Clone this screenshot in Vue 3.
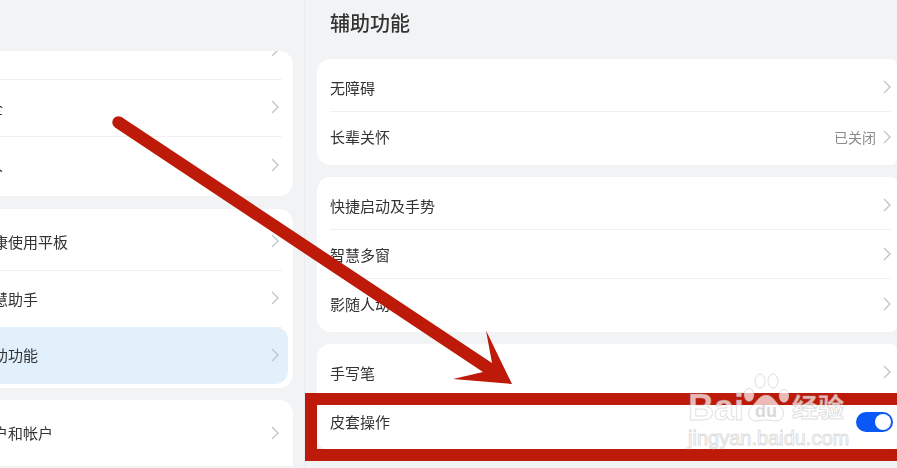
<template>
  <div class="page">
    <div class="content">
      <aside class="left-pane">
        <div v-for="(group, i) in leftGroups" :key="i" class="left-card">
          <div
            v-for="row in group"
            :key="row.label"
            class="left-row"
            :class="{ active: row.active, scrolled: row.scrolled }"
          >
            <span class="left-label" :class="{ short: row.short, hidden: row.scrolled }">{{ row.label }}</span>
            <svg class="chevron" viewBox="0 0 8 14"><path d="M1 1l6 6-6 6" /></svg>
          </div>
        </div>
      </aside>

      <main class="right-pane">
        <h1 class="title">辅助功能</h1>
        <div v-for="(group, i) in rightGroups" :key="i" class="right-card">
          <div v-for="row in group" :key="row.label" class="right-row">
            <span class="right-label">{{ row.label }}</span>
            <span v-if="row.value" class="value">{{ row.value }}</span>
            <span v-if="row.toggle" class="toggle"><i class="knob"></i></span>
            <svg v-else class="chevron" viewBox="0 0 8 14"><path d="M1 1l6 6-6 6" /></svg>
          </div>
        </div>
      </main>
    </div>

    <!-- annotation layer -->
    <svg class="arrow" viewBox="0 0 897 468">
      <path d="M115 127.500 L121.500 117 L492 363 L486 330.500 L512 384 L453 379 L483 372 L115 127.500Z" />
      <circle cx="118.300" cy="122.300" r="6" />
    </svg>
    <div class="frame"></div>

    <div class="watermark">
      <div class="wm-top">
        <span class="wm-bai">Bai</span>
        <svg class="paw" viewBox="0 0 46 56">
          <ellipse cx="6" cy="24" rx="5" ry="6.500" />
          <ellipse cx="17" cy="10" rx="5" ry="7" />
          <ellipse cx="30" cy="10" rx="5" ry="7" />
          <ellipse cx="41" cy="25" rx="5" ry="6.500" />
          <path d="M23 24c7 0 9 7 14 11 6 5 4 15-4 15-4 0-6-1-10-1s-6 1-10 1c-8 0-10-10-4-15 5-4 7-11 14-11z" />
          <text x="23" y="46" text-anchor="middle" class="wm-du">du</text>
        </svg>
        <span class="wm-cn">经验</span>
      </div>
      <div class="wm-url">jingyan.baidu.com</div>
    </div>
  </div>
</template>

<script setup>
const leftGroups = [
  [
    { label: '显示', scrolled: true, short: true },
    { label: '安全', short: true },
    { label: '个人', short: true }
  ],
  [
    { label: '健康使用平板' },
    { label: '智慧助手', mid: true },
    { label: '辅助功能', active: true }
  ],
  [
    { label: '用户和帐户' }
  ]
]

const rightGroups = [
  [
    { label: '无障碍' },
    { label: '长辈关怀', value: '已关闭' }
  ],
  [
    { label: '快捷启动及手势' },
    { label: '智慧多窗' },
    { label: '影随人动' }
  ],
  [
    { label: '手写笔' },
    { label: '皮套操作', toggle: true }
  ]
]
</script>

<style>
html, body {
  margin: 0;
  overflow: hidden;
}
</style>

<style scoped>
.page {
  position: relative;
  width: 897px;
  height: 468px;
  overflow: hidden;
  background: #f1f3f5;
  font-family: "Liberation Sans", "Noto Sans CJK SC", sans-serif;
  color: #333;
}

.content {
  display: flex;
  height: 100%;
  filter: blur(0.45px);
}

.left-pane {
  width: 305px;
  flex-shrink: 0;
  box-sizing: border-box;
  padding: 51px 11px 0 0;
  border-right: 1px solid #e9ebee;
  display: flex;
  flex-direction: column;
  gap: 13px;
}

.left-card {
  background: #fff;
  border-radius: 0 14px 14px 0;
  padding: 5px 5px 4px 0;
  overflow: hidden;
  flex-shrink: 0;
}

.left-card:first-child {
  padding-top: 0;
  padding-bottom: 2px;
}

.left-card:last-child {
  margin-top: -1px;
  border-radius: 0 14px 0 0;
}

.left-row {
  height: 57px;
  box-sizing: border-box;
  display: flex;
  align-items: center;
  justify-content: space-between;
  padding: 0 3px 2px 0;
  margin-right: 6px;
  border-bottom: 1px solid #eef0f1;
  font-size: 15px;
}

.left-row:last-child {
  border-bottom: none;
}

.left-row.scrolled {
  margin-top: -28px;
}

.left-row.active {
  background: #e1f0fb;
  border-radius: 0 13px 13px 0;
  margin-top: -1px;
  margin-right: 0;
  padding-right: 9px;
}

.left-label {
  margin-left: -22px;
  white-space: nowrap;
}

.left-label.short {
  margin-left: -27px;
}

.left-label.hidden {
  margin-left: -29px;
}

.chevron {
  width: 8px;
  height: 14px;
  flex-shrink: 0;
  fill: none;
  stroke: #c2c5c8;
  stroke-width: 1.4;
}

.right-pane {
  flex: 1;
  padding: 0 0 0 12px;
  min-width: 0;
}

.title {
  margin: 0;
  height: 47px;
  padding: 1px 0 0 13px;
  box-sizing: border-box;
  font-size: 20px;
  font-weight: 500;
  line-height: 47px;
  color: #333;
}

.right-card {
  background: #fff;
  border-radius: 14px 6px 6px 14px;
  padding: 4px 6px 4px 13px;
  margin-top: 12px;
}

.right-row {
  height: 49px;
  box-sizing: border-box;
  display: flex;
  align-items: center;
  border-bottom: 1px solid #eef0f1;
  font-size: 15px;
}

.right-row:last-child {
  border-bottom: none;
}

.right-label {
  flex: 1;
}

.value {
  font-size: 14px;
  color: #8a8a8a;
  margin-right: 7px;
}

.toggle {
  width: 37px;
  height: 20px;
  border-radius: 10px;
  background: #0a59f7;
  display: flex;
  align-items: center;
  justify-content: flex-end;
  padding-right: 2px;
  box-sizing: border-box;
  margin-right: -2px;
}

.knob {
  width: 16px;
  height: 16px;
  border-radius: 50%;
  background: #fff;
}

.arrow {
  position: absolute;
  left: 0;
  top: 0;
  width: 897px;
  height: 468px;
  fill: #bd1a0a;
}

.frame {
  position: absolute;
  left: 305px;
  top: 393px;
  width: 620px;
  height: 68px;
  box-sizing: border-box;
  border: 12px solid #bd1a0a;
}

.watermark {
  position: absolute;
  left: 688px;
  top: 372px;
  width: 165px;
}

.wm-top {
  display: flex;
  align-items: flex-end;
  height: 50px;
}

.wm-bai {
  font-size: 36px;
  font-weight: 700;
  line-height: 36px;
  width: 55px;
  margin-bottom: -4px;
  color: rgba(255, 255, 255, 0.7);
  -webkit-text-stroke: 1px rgba(160, 160, 160, 0.35);
}

.paw {
  width: 46px;
  height: 56px;
  flex-shrink: 0;
  margin-bottom: -5px;
  fill: rgba(255, 255, 255, 0.7);
  stroke: rgba(160, 160, 160, 0.35);
}

.wm-du {
  font-size: 18px;
  font-weight: 700;
  fill: rgba(190, 190, 190, 0.6);
  stroke: none;
}

.wm-cn {
  margin-left: 3px;
  margin-bottom: -2px;
  font-size: 26px;
  line-height: 32px;
  font-weight: 700;
  white-space: nowrap;
  color: rgba(255, 255, 255, 0.7);
  -webkit-text-stroke: 1px rgba(160, 160, 160, 0.35);
}

.wm-url {
  margin-top: 4px;
  font-size: 20px;
  line-height: 24px;
  white-space: nowrap;
  color: rgba(255, 255, 255, 0.5);
  -webkit-text-stroke: 1px rgba(170, 170, 170, 0.4);
}
</style>
